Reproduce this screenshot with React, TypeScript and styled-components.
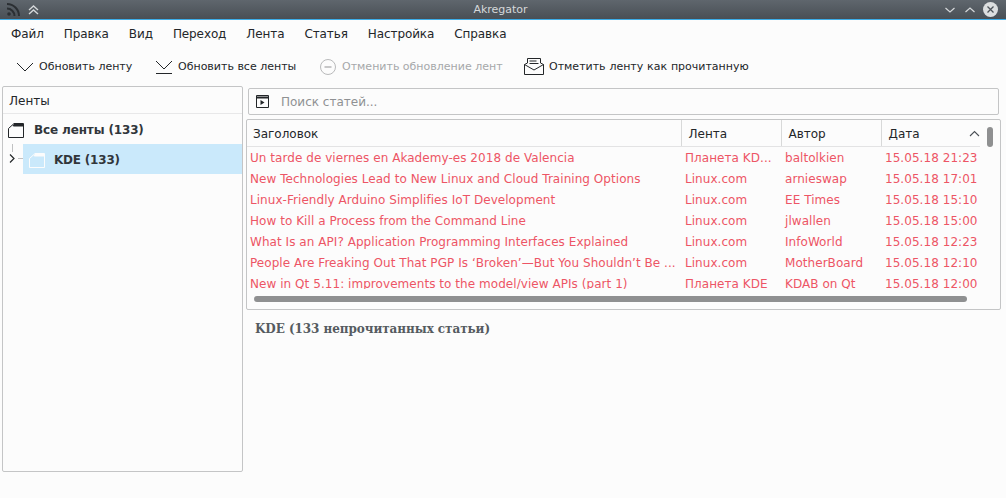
import styled, { createGlobalStyle } from "styled-components";

const Global = createGlobalStyle`
  html, body { margin: 0; padding: 0; background: #fcfcfc; }
  body { font-family: "DejaVu Sans", sans-serif; font-size: 12px; color: #232629; }
`;

const Window = styled.div`
  width: 1006px;
  height: 498px;
  display: flex;
  flex-direction: column;
  overflow: hidden;
  background: #fcfcfc;
`;

const TitleBar = styled.div`
  height: 19px;
  flex: none;
  display: flex;
  align-items: center;
  justify-content: space-between;
  padding: 0 8px 0 7px;
  background: linear-gradient(#5f666d, #494f55);
  border-bottom: 1px solid #3daee9;
`;

const TitleLeft = styled.div`
  width: 51px;
  display: flex;
  align-items: center;
  gap: 8px;
`;

const TitleRight = styled.div`
  width: 55px;
  display: flex;
  align-items: center;
  justify-content: flex-end;
  gap: 6px;
`;

const TitleText = styled.div`
  font-size: 11px;
  color: #d5d8da;
`;

const MenuBar = styled.div`
  height: 26px;
  flex: none;
  display: flex;
  align-items: center;
  padding: 1px 0 0 11px;
  box-sizing: border-box;
  gap: 20px;
  font-size: 12px;
  letter-spacing: -0.1px;
`;

const ToolBar = styled.div`
  height: 40px;
  box-sizing: border-box;
  padding: 1px 0 0 16px;
  flex: none;
  display: flex;
  align-items: center;
`;

const ToolButton = styled.div<{ $w: number; $off?: boolean; $wide?: boolean }>`
  width: ${(p) => p.$w}px;
  flex: none;
  display: flex;
  align-items: center;
  gap: 5px;
  font-size: 11px;
  white-space: nowrap;
  word-spacing: ${(p) => (p.$wide ? "0.3px" : "0")};
  color: ${(p) => (p.$off ? "#a6a8aa" : "#232629")};
`;

const Body = styled.div`
  flex: 1;
  display: flex;
  padding: 0 5px 26px 2px;
`;

const Sidebar = styled.div`
  width: 239px;
  flex: none;
  border: 1px solid #c4c5c6;
  border-radius: 2px;
  margin-right: 3px;
`;

const SideHead = styled.div`
  height: 27px;
  box-sizing: border-box;
  display: flex;
  align-items: center;
  padding: 2px 0 0 6px;
  border-bottom: 1px solid #e8e8e9;
  font-size: 12px;
`;

const TreeRow = styled.div`
  height: 30px;
  box-sizing: border-box;
  display: flex;
  align-items: center;
  gap: 10px;
  padding: 2px 0 0 5px;
  font-size: 12px;
  font-weight: 700;
  letter-spacing: -0.14px;
  color: #31363b;
`;

const TreeChild = styled.div`
  position: relative;
  height: 30px;
  box-sizing: border-box;
  margin-left: 20px;
  display: flex;
  align-items: center;
  gap: 9px;
  padding: 2px 0 0 6px;
  background: #cae9fb;
  font-size: 12px;
  font-weight: 700;
  letter-spacing: -0.2px;
  color: #31363b;
`;

const Branch = styled.svg`
  position: absolute;
  left: -20px;
  top: 0;
`;

const Main = styled.div`
  flex: 1;
  display: flex;
  flex-direction: column;
  padding-top: 2px;
`;

const SearchBox = styled.div`
  height: 25px;
  margin: 0 2px;
  border: 1px solid #c4c5c6;
  border-radius: 2px;
  display: flex;
  align-items: center;
  gap: 12px;
  padding-left: 7px;
  font-size: 12px;
  color: #8f9193;
`;

const ArticleList = styled.div`
  position: relative;
  height: 189px;
  margin-top: 4px;
  border: 1px solid #c4c5c6;
  border-radius: 2px;
  overflow: hidden;
`;

const HeadRow = styled.div`
  height: 27px;
  box-sizing: border-box;
  width: 733px;
  display: grid;
  grid-template-columns: 435px 100px 100px 98px;
  border-bottom: 1px solid #e3e3e4;
`;

const HeadCell = styled.div`
  position: relative;
  display: flex;
  align-items: center;
  padding: 2px 0 0 6.5px;
  border-right: 1px solid #d8d9d9;
  font-size: 12px;
  &:first-child { padding-left: 6px; }
  &:last-child { border-right: none; }
`;

const SortMark = styled.svg`
  position: absolute;
  right: 0;
  top: 10px;
`;

const Rows = styled.div`
  height: 142px;
  overflow: hidden;
`;

const Row = styled.div`
  height: 21px;
  display: grid;
  grid-template-columns: 435px 100px 100px 100px;
  width: 735px;
  align-items: center;
  color: #ed5565;
  font-size: 12px;
  letter-spacing: 0.05px;
`;

const Cell = styled.div`
  padding-left: 3px;
  white-space: nowrap;
`;

const VScroll = styled.div`
  position: absolute;
  left: 740px;
  top: 7px;
  width: 6px;
  height: 20px;
  border-radius: 3px;
  background: #8f9091;
`;

const HScroll = styled.div`
  position: absolute;
  left: 7px;
  top: 176px;
  width: 713px;
  height: 6px;
  border-radius: 3px;
  background: #8f9091;
`;

const Summary = styled.div`
  padding: 12px 0 0 9px;
  font-family: "DejaVu Serif", "Liberation Serif", serif;
  font-size: 12px;
  font-weight: 700;
  letter-spacing: -0.07px;
  color: #555b60;
`;

const rows = [
  ["Un tarde de viernes en Akademy-es 2018 de Valencia", "Планета KD...", "baltolkien", "15.05.18 21:23"],
  ["New Technologies Lead to New Linux and Cloud Training Options", "Linux.com", "arnieswap", "15.05.18 17:01"],
  ["Linux-Friendly Arduino Simplifies IoT Development", "Linux.com", "EE Times", "15.05.18 15:10"],
  ["How to Kill a Process from the Command Line", "Linux.com", "jlwallen", "15.05.18 15:00"],
  ["What Is an API? Application Programming Interfaces Explained", "Linux.com", "InfoWorld", "15.05.18 12:23"],
  ["People Are Freaking Out That PGP Is ‘Broken’—But You Shouldn’t Be ...", "Linux.com", "MotherBoard", "15.05.18 12:10"],
  ["New in Qt 5.11: improvements to the model/view APIs (part 1)", "Планета KDE", "KDAB on Qt", "15.05.18 12:00"],
];

const menus = ["Файл", "Правка", "Вид", "Переход", "Лента", "Статья", "Настройка", "Справка"];

function Folder({ color }: { color: string }) {
  return (
    <svg width="16" height="15" viewBox="0 0 16 15" fill="none" stroke={color}>
      <path d="M.5 14.5V5.5L6 .5H15.5V14.5Z" />
      <path d="M6 1H15V3.5H6L4.5 3Z" fill={color} stroke="none" />
    </svg>
  );
}

export default function App() {
  return (
    <Window>
      <Global />
      <TitleBar>
        <TitleLeft>
          <svg width="13" height="13" viewBox="0 0 13 13" fill="none" stroke="#2b2f33" strokeWidth="2">
            <circle cx="2" cy="11" r="1.8" fill="#2b2f33" stroke="none" />
            <path d="M0 5.5a7.5 7.5 0 0 1 7.5 7.5M0 1a12 12 0 0 1 12 12" />
          </svg>
          <svg width="11" height="10" viewBox="0 0 11 10" fill="none" stroke="#d5d8da" strokeWidth="1.4">
            <path d="M1 5l4.5-4 4.5 4M1 9l4.5-4 4.5 4" />
          </svg>
        </TitleLeft>
        <TitleText>Akregator</TitleText>
        <TitleRight>
          <svg width="14" height="10" viewBox="0 0 14 10" fill="none" stroke="#d5d8da" strokeWidth="1.2">
            <path d="M2.5 3l4.5 4 4.5-4" />
          </svg>
          <svg width="14" height="10" viewBox="0 0 14 10" fill="none" stroke="#d5d8da" strokeWidth="1.2">
            <path d="M2.5 7l4.5-4 4.5 4" />
          </svg>
          <svg width="15" height="15" viewBox="0 0 15 15" fill="none">
            <circle cx="7.5" cy="7.5" r="7.5" fill="#dcdedf" />
            <path d="M4.5 4.5l6 6M10.5 4.5l-6 6" stroke="#4d5359" strokeWidth="1.3" />
          </svg>
        </TitleRight>
      </TitleBar>

      <MenuBar>
        {menus.map((m) => (
          <span key={m}>{m}</span>
        ))}
      </MenuBar>

      <ToolBar>
        <ToolButton $w={139}>
          <svg width="18" height="10" viewBox="0 0 18 10" fill="none" stroke="#232629">
            <path d="M1 1l8 8 8-8" />
          </svg>
          Обновить ленту
        </ToolButton>
        <ToolButton $w={164}>
          <svg width="18" height="14" viewBox="0 0 18 14" fill="none" stroke="#232629">
            <path d="M1 1l8 8 8-8M1 13.5h16" />
          </svg>
          Обновить все ленты
        </ToolButton>
        <ToolButton $w={205} $off>
          <svg width="18" height="18" viewBox="0 0 18 18" fill="none" stroke="#b9babb">
            <circle cx="9" cy="9" r="7.5" />
            <path d="M5.5 9h7" strokeWidth="1.6" />
          </svg>
          Отменить обновление лент
        </ToolButton>
        <ToolButton $w={240} $wide>
          <svg width="20" height="17" viewBox="0 0 20 17" fill="none" stroke="#232629">
            <path d="M3.5 5V.5h13V5M.5 6.5l3-1.5M19.5 6.5l-3-1.5M.5 6.5v10h19v-10L10 12Z" />
            <path d="M5.5 3h7M5.5 5.5h9" />
          </svg>
          Отметить ленту как прочитанную
        </ToolButton>
      </ToolBar>

      <Body>
        <Sidebar>
          <SideHead>Ленты</SideHead>
          <TreeRow>
            <Folder color="#232629" />
            Все ленты (133)
          </TreeRow>
          <TreeChild>
            <Branch width="20" height="30" viewBox="0 0 20 30" fill="none">
              <path d="M9.5 0v8M15 14.5h5" stroke="#c0c1c2" />
              <path d="M7 10.5l4 4-4 4" stroke="#232629" strokeWidth="1.2" />
            </Branch>
            <Folder color="#fcfcfc" />
            KDE (133)
          </TreeChild>
        </Sidebar>

        <Main>
          <SearchBox>
            <svg width="13" height="13" viewBox="0 0 13 13" fill="none" stroke="#232629">
              <path d="M.5.5h12v12H.5Z" />
              <path d="M.5 2.5h12" strokeWidth="2" />
              <path d="M4.5 5v5l4-2.5Z" fill="#232629" stroke="none" />
            </svg>
            Поиск статей...
          </SearchBox>
          <ArticleList>
            <HeadRow>
              <HeadCell>Заголовок</HeadCell>
              <HeadCell>Лента</HeadCell>
              <HeadCell>Автор</HeadCell>
              <HeadCell>
                Дата
                <SortMark width="11" height="7" viewBox="0 0 11 7" fill="none" stroke="#4d5257" strokeWidth="1.1">
                  <path d="M1 6l4.5-4.5L10 6" />
                </SortMark>
              </HeadCell>
            </HeadRow>
            <Rows>
              {rows.map((r) => (
                <Row key={r[0]}>
                  {r.map((c) => (
                    <Cell key={c}>{c}</Cell>
                  ))}
                </Row>
              ))}
            </Rows>
            <VScroll />
            <HScroll />
          </ArticleList>
          <Summary>KDE (133 непрочитанных статьи)</Summary>
        </Main>
      </Body>
    </Window>
  );
}
